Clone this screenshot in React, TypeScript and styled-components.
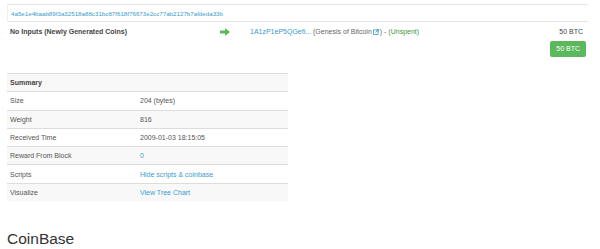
import React from "react";
import styled, { createGlobalStyle } from "styled-components";

const GlobalStyle = createGlobalStyle`
  body {
    margin: 0;
    background: #ffffff;
    font-family: "Liberation Sans", Arial, sans-serif;
    color: #333333;
  }
`;

const Page = styled.div`
  padding: 4px 12px 0 7px;
  width: 600px;
  box-sizing: border-box;
`;

const TxBox = styled.div`
  display: flex;
  flex-direction: column;
`;

const HashRow = styled.div`
  height: 16px;
  display: flex;
  align-items: center;
  padding-left: 3px;
  border-top: 1px solid #e6e6e6;
  border-bottom: 1px solid #e6e6e6;
  border-left: 1px solid #f0f0f0;
  font-size: 6.2px;
`;

const Link = styled.a`
  color: #3a9ccb;
  text-decoration: none;
`;

const TxBody = styled.div`
  display: flex;
  align-items: center;
  padding: 5px 5px 0 3px;
  height: 10px;
  font-size: 7px;
  line-height: 10px;
`;

const Inputs = styled.div`
  width: 210px;
  font-weight: bold;
  color: #444;
`;

const ArrowCell = styled.div`
  width: 30px;
  display: flex;
  align-items: center;
`;

const Outputs = styled.div`
  flex: 1;
  color: #666;
`;

const Unspent = styled.span`
  color: #3d9a3d;
`;

const Amount = styled.div`
  color: #444;
`;

const ButtonRow = styled.div`
  display: flex;
  justify-content: flex-end;
  padding: 4px 2px 0 0;
`;

const GreenButton = styled.span`
  background: #5cb85c;
  color: #ffffff;
  font-size: 7px;
  height: 16px;
  line-height: 16px;
  padding: 0 6px;
  border-radius: 2px;
`;

const Table = styled.table`
  margin-top: 16px;
  width: 281px;
  border-collapse: collapse;
  font-size: 7px;
  color: #555;
`;

const Row = styled.tr<{ $striped: boolean }>`
  background: ${(p) => (p.$striped ? "#f8f8f8" : "#ffffff")};
`;

const Cell = styled.td<{ $bold?: boolean }>`
  border-top: 1px solid #dddddd;
  height: 17.3px;
  padding: 0 3px;
  font-weight: ${(p) => (p.$bold ? "bold" : "normal")};
  color: ${(p) => (p.$bold ? "#444" : "inherit")};
  vertical-align: middle;
  &:first-child {
    width: 124px;
  }
`;

const Heading = styled.h2`
  margin: 29px 0 0;
  font-size: 15.5px;
  font-weight: normal;
  line-height: 18px;
  color: #333;
`;

const Arrow = () => (
  <svg width="10" height="8" viewBox="0 0 10 8">
    <path d="M0 2.5h5V0l5 4-5 4V5.5H0z" fill="#5cb85c" />
  </svg>
);

const ExtLink = () => (
  <svg width="6" height="6" viewBox="0 0 6 6" style={{ margin: "0 1px", verticalAlign: "-0.5px" }}>
    <rect x="0.5" y="1" width="4.5" height="4.5" fill="none" stroke="#3a9ccb" strokeWidth="0.8" />
    <path d="M2.5 3.5L5.5 0.5M3.5 0.5h2v2" fill="none" stroke="#3a9ccb" strokeWidth="0.8" />
  </svg>
);

const rows: { label: string; value: string; link?: boolean }[] = [
  { label: "Size", value: "204 (bytes)" },
  { label: "Weight", value: "816" },
  { label: "Received Time", value: "2009-01-03 18:15:05" },
  { label: "Reward From Block", value: "0", link: true },
  { label: "Scripts", value: "Hide scripts & coinbase", link: true },
  { label: "Visualize", value: "View Tree Chart", link: true },
];

export default function App() {
  return (
    <>
      <GlobalStyle />
      <Page>
        <TxBox>
          <HashRow>
            <Link href="#">4a5e1e4baab89f3a32518a88c31bc87f618f76673e2cc77ab2127b7afdeda33b</Link>
          </HashRow>
          <TxBody>
            <Inputs>No Inputs (Newly Generated Coins)</Inputs>
            <ArrowCell>
              <Arrow />
            </ArrowCell>
            <Outputs>
              <Link href="#">1A1zP1eP5QGefi...</Link> (Genesis of Bitcoin
              <ExtLink />) - <Unspent>(Unspent)</Unspent>
            </Outputs>
            <Amount>50 BTC</Amount>
          </TxBody>
          <ButtonRow>
            <GreenButton>50 BTC</GreenButton>
          </ButtonRow>
        </TxBox>
        <Table>
          <tbody>
            <Row $striped>
              <Cell $bold colSpan={2}>Summary</Cell>
            </Row>
            {rows.map((r, i) => (
              <Row key={r.label} $striped={i % 2 === 1}>
                <Cell>{r.label}</Cell>
                <Cell>{r.link ? <Link href="#">{r.value}</Link> : r.value}</Cell>
              </Row>
            ))}
          </tbody>
        </Table>
        <Heading>CoinBase</Heading>
      </Page>
    </>
  );
}
